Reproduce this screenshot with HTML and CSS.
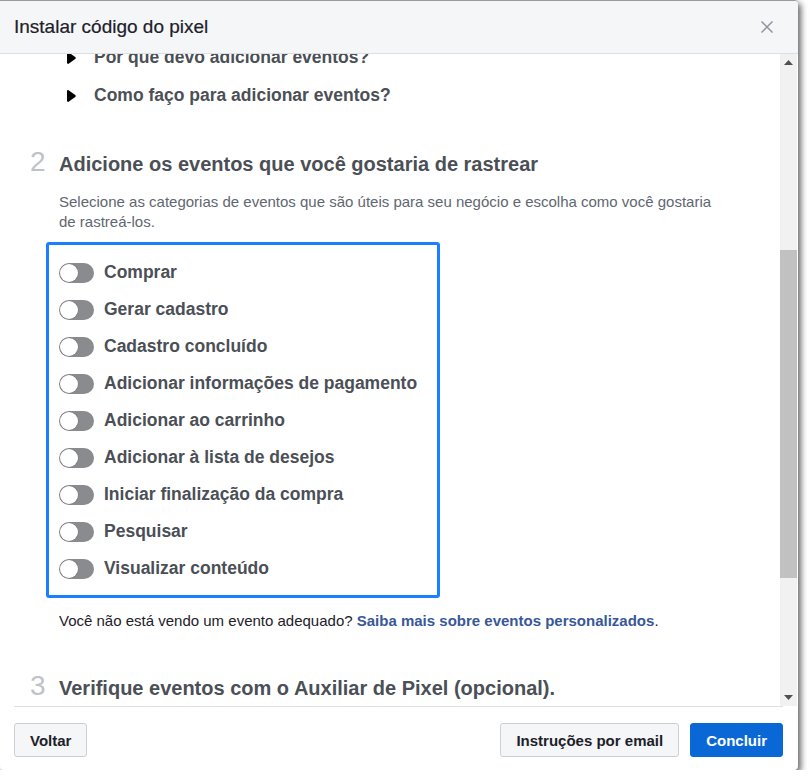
FILE: index.html
```html
<!DOCTYPE html>
<html lang="pt-BR">
<head>
<meta charset="utf-8">
<title>Instalar código do pixel</title>
<link rel="stylesheet" href="styles.css">
</head>
<body>
<div class="dialog">
  <header class="dlg-head">
    <h1 class="dlg-title">Instalar código do pixel</h1>
    <button class="close" aria-label="Fechar">
      <svg width="12" height="12" viewBox="0 0 12 12"><path d="M0.5 0.5 L11.5 11.5 M11.5 0.5 L0.5 11.5" stroke="#90949c" stroke-width="1.5" fill="none"/></svg>
    </button>
  </header>
  <div class="dlg-body">
    <div class="viewport">
      <div class="content">
        <section class="step">
          <ul class="faq">
            <li><svg class="caret" width="9" height="12" viewBox="0 0 9 12"><path d="M1.2 0 C0.4 0 0 0.5 0 1.4 L0 10.6 C0 11.5 0.4 12 1.2 12 L8.2 7 C9 6.4 9 5.6 8.2 5 Z" fill="#000"/></svg><span>Por que devo adicionar eventos?</span></li>
            <li><svg class="caret" width="9" height="12" viewBox="0 0 9 12"><path d="M1.2 0 C0.4 0 0 0.5 0 1.4 L0 10.6 C0 11.5 0.4 12 1.2 12 L8.2 7 C9 6.4 9 5.6 8.2 5 Z" fill="#000"/></svg><span>Como faço para adicionar eventos?</span></li>
          </ul>
        </section>
        <section class="step step-2">
          <h2 class="step-title"><span class="step-num">2</span>Adicione os eventos que você gostaria de rastrear</h2>
          <div class="step-body">
            <p class="desc">Selecione as categorias de eventos que são úteis para seu negócio e escolha como você gostaria de rastreá-los.</p>
            <div class="events">
              <div class="event"><span class="toggle"></span><span class="event-label">Comprar</span></div>
              <div class="event"><span class="toggle"></span><span class="event-label">Gerar cadastro</span></div>
              <div class="event"><span class="toggle"></span><span class="event-label">Cadastro concluído</span></div>
              <div class="event"><span class="toggle"></span><span class="event-label">Adicionar informações de pagamento</span></div>
              <div class="event"><span class="toggle"></span><span class="event-label">Adicionar ao carrinho</span></div>
              <div class="event"><span class="toggle"></span><span class="event-label">Adicionar à lista de desejos</span></div>
              <div class="event"><span class="toggle"></span><span class="event-label">Iniciar finalização da compra</span></div>
              <div class="event"><span class="toggle"></span><span class="event-label">Pesquisar</span></div>
              <div class="event"><span class="toggle"></span><span class="event-label">Visualizar conteúdo</span></div>
            </div>
            <p class="note">Você não está vendo um evento adequado? <a href="#" class="link">Saiba mais sobre eventos personalizados</a>.</p>
          </div>
        </section>
        <section class="step step-3">
          <h2 class="step-title"><span class="step-num">3</span>Verifique eventos com o Auxiliar de Pixel (opcional).</h2>
        </section>
      </div>
    </div>
    <div class="scrollbar">
      <div class="sb-btn"><svg width="9" height="5" viewBox="0 0 9 5"><path d="M0 5 L4.5 0 L9 5 Z" fill="#505050"/></svg></div>
      <div class="sb-track"><div class="sb-thumb"></div></div>
      <div class="sb-btn"><svg width="9" height="5" viewBox="0 0 9 5"><path d="M0 0 L9 0 L4.5 5 Z" fill="#505050"/></svg></div>
    </div>
  </div>
  <footer class="dlg-foot">
    <button class="btn">Voltar</button>
    <button class="btn btn-push">Instruções por email</button>
    <button class="btn btn-primary">Concluir</button>
  </footer>
</div>
</body>
</html>
```

FILE: styles.css
```css
* { box-sizing: border-box; }
html, body { margin: 0; background: #fff; }
body { font-family: "Liberation Sans", Arial, sans-serif; }

.dialog {
  width: 798px;
  height: 770px;
  background: #fff;
  border-top: 1px solid #9a9a9a;
  border-radius: 0 4px 4px 4px;
  box-shadow: 3px 3px 6px rgba(0, 0, 0, 0.6);
  display: flex;
  flex-direction: column;
  overflow: hidden;
}

.dlg-head {
  flex: none;
  height: 53px;
  background: #f5f6f7;
  border-bottom: 1px solid #dddfe2;
  display: flex;
  align-items: center;
  justify-content: space-between;
  padding: 0 25px 0 14px;
}
.dlg-title {
  margin: 0;
  font-size: 19px;
  font-weight: 400;
  color: #1d2129;
  -webkit-text-stroke: 0.2px #1d2129;
}
.close {
  border: 0;
  background: none;
  padding: 0;
  width: 12px;
  height: 12px;
  display: flex;
}

.dlg-body {
  flex: 1;
  min-height: 0;
  display: flex;
}
.viewport {
  flex: 1;
  overflow: hidden;
}
.content {
  margin-top: -16px;
  padding: 0 50px 0 30px;
}

.faq {
  list-style: none;
  margin: 0;
  padding: 0 0 0 37px;
}
.faq li {
  height: 38px;
  display: flex;
  align-items: center;
  gap: 18px;
  font-size: 17.5px;
  font-weight: 700;
  color: #4b4f56;
}
.caret { flex: none; margin-top: 1px; }

.step-2 { margin-top: 36px; }
.step-3 { margin-top: 43px; }

.step-title {
  margin: 0;
  font-size: 20px;
  line-height: 24px;
  font-weight: 700;
  color: #4b4f56;
  white-space: nowrap;
}
.step-num {
  display: inline-block;
  width: 29px;
  font-size: 28px;
  font-weight: 400;
  color: #bec3c9;
}
.step-body { padding-left: 29px; }

.desc {
  margin: 16px 0 0;
  font-size: 15px;
  line-height: 20px;
  color: #606770;
}

.events {
  margin: 10px 0 0 -13px;
  width: 394px;
  border: 3px solid #1a80ff;
  border-radius: 3px;
  padding: 9px 10px 8px;
}
.event {
  height: 37px;
  display: flex;
  align-items: center;
  gap: 10px;
}
.toggle {
  flex: none;
  position: relative;
  width: 35px;
  height: 20px;
  border-radius: 10px;
  background: #898b8f;
}
.toggle::after {
  content: "";
  position: absolute;
  left: 1px;
  top: 1px;
  width: 18px;
  height: 18px;
  border-radius: 50%;
  background: #fff;
  box-shadow: 0 0 0 0.5px rgba(0, 0, 0, 0.15);
}
.event-label {
  font-size: 17.5px;
  font-weight: 700;
  color: #4b4f56;
}

.note {
  margin: 13px 0 0;
  font-size: 15px;
  line-height: 20px;
  color: #1d2129;
}
.link {
  color: #385898;
  font-weight: 700;
  text-decoration: none;
}

.scrollbar {
  flex: none;
  width: 17px;
  margin-right: 1px;
  background: #f1f1f1;
  display: flex;
  flex-direction: column;
}
.sb-btn {
  height: 17px;
  display: flex;
  align-items: center;
  justify-content: center;
}
.sb-track { flex: 1; }
.sb-thumb {
  margin-top: 179px;
  height: 328px;
  background: #c1c1c1;
}

.dlg-foot {
  flex: none;
  margin: 0 15px 0 14px;
  border-top: 1px solid #dddfe2;
  padding: 16px 0 13px;
  display: flex;
  gap: 11px;
}
.btn {
  height: 34px;
  padding: 0 15px;
  border: 1px solid #ccd0d5;
  border-radius: 3px;
  background: #f5f6f7;
  font-family: "Liberation Sans", Arial, sans-serif;
  font-size: 15px;
  font-weight: 700;
  color: #1d2129;
}
.btn-push { margin-left: auto; }
.btn-primary {
  background: #0a68d6;
  border-color: #0a68d6;
  color: #fff;
}
```
